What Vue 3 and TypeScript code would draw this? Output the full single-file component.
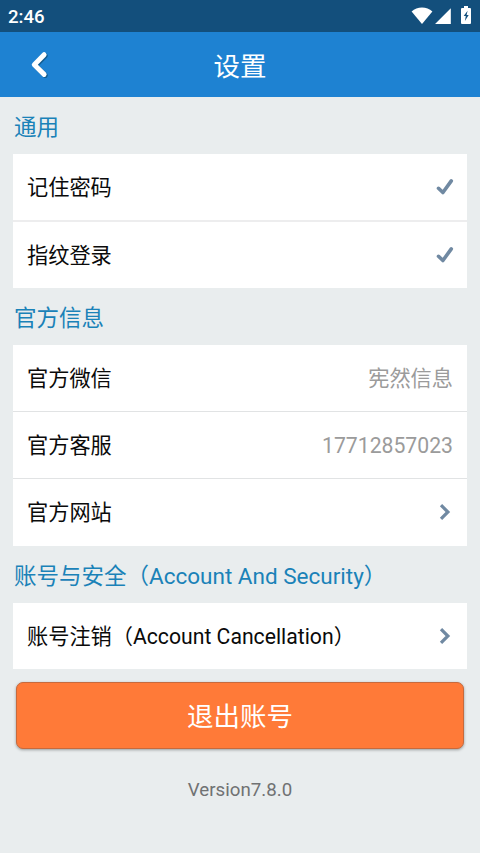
<script setup lang="ts">
type RowKind = 'check' | 'link' | 'text'

interface Row {
  label: string
  kind: RowKind
  value?: string
}

interface Section {
  title: string
  divider: 'thick' | 'thin'
  rows: Row[]
}

const sections: Section[] = [
  {
    title: '通用',
    divider: 'thick',
    rows: [
      { label: '记住密码', kind: 'check' },
      { label: '指纹登录', kind: 'check' },
    ],
  },
  {
    title: '官方信息',
    divider: 'thin',
    rows: [
      { label: '官方微信', kind: 'text', value: '宪然信息' },
      { label: '官方客服', kind: 'text', value: '17712857023' },
      { label: '官方网站', kind: 'link' },
    ],
  },
  {
    title: '账号与安全（Account And Security）',
    divider: 'thin',
    rows: [{ label: '账号注销（Account Cancellation）', kind: 'link' }],
  },
]
</script>

<template>
  <div class="screen">
    <div class="status">
      <span class="clock">2:46</span>
      <div class="indicators">
        <svg class="wifi" width="22" height="18" viewBox="0 0 22 18">
          <path d="M.6 4.400Q5 .4 11 .4t10.400 4L11 17Z" fill="#fff" />
        </svg>
        <svg class="signal" width="16" height="16" viewBox="0 0 16 16">
          <path d="M15.800.3v15.700H.1Z" fill="#fff" />
        </svg>
        <svg class="battery" width="10" height="18" viewBox="0 0 10 18">
          <path d="M3 0h4v2h2q1 0 1 1v14q0 1-1 1H1q-1 0-1-1V3q0-1 1-1h2Z" fill="#fff" />
          <path d="M6.600 4.700 2.700 10.100h2.100l-.9 5 3.800-6.100H5.600Z" fill="#134f7c" />
        </svg>
      </div>
    </div>

    <header class="bar">
      <button class="back" aria-label="返回">
        <svg width="20" height="30" viewBox="0 0 20 30">
          <path d="M14.100 4.700 4.300 14.700l9.800 9.700" transform="translate(1.200 1)" stroke="#135d91" />
          <path d="M14.100 4.700 4.300 14.700l9.800 9.700" stroke="#fff" />
        </svg>
      </button>
      <h1 class="title">设置</h1>
    </header>

    <main class="content">
      <section v-for="section in sections" :key="section.title">
        <h2 class="heading">{{ section.title }}</h2>
        <ul class="card" :class="section.divider">
          <li v-for="row in section.rows" :key="row.label" class="row">
            <span class="label">{{ row.label }}</span>
            <svg v-if="row.kind === 'check'" class="check" width="18" height="18" viewBox="0 0 18 18">
              <path d="M2.500 10.300 6.900 14.500 15.300 2.900" />
            </svg>
            <svg v-else-if="row.kind === 'link'" class="chevron" width="12" height="18" viewBox="0 0 12 18">
              <path d="M2 2.100 8.900 9 2 15.900" />
            </svg>
            <span v-else class="value">{{ row.value }}</span>
          </li>
        </ul>
      </section>

      <button class="logout">退出账号</button>
      <p class="version">Version7.8.0</p>
    </main>
  </div>
</template>

<style>
body {
  background: #e9edee;
}
</style>

<style scoped>
.screen {
  width: 480px;
  height: 853px;
  overflow: hidden;
  display: flex;
  flex-direction: column;
  background: #e9edee;
  font-family: Roboto, 'Noto Sans CJK SC', sans-serif;
}

.status {
  flex: none;
  display: flex;
  justify-content: space-between;
  height: 32px;
  box-sizing: border-box;
  padding: 0 8px;
  background: #134f7c;
  color: #fff;
}

.clock {
  font-size: 18.6px;
  font-weight: 500;
  line-height: 34px;
}

.indicators {
  display: flex;
  align-items: flex-start;
}

.wifi {
  margin: 7px 2px 0 0;
}

.signal {
  margin: 8px 10px 0 0;
}

.battery {
  margin: 6px 1px 0 0;
}

.bar {
  flex: none;
  display: grid;
  grid-template-columns: 80px 1fr 80px;
  align-items: center;
  height: 65px;
  background: #1e82d2;
}

.back {
  display: flex;
  align-items: center;
  height: 65px;
  padding: 0 0 0 30px;
  border: 0;
  background: none;
}

.back path {
  fill: none;
  stroke-width: 5;
  stroke-linecap: round;
  stroke-linejoin: round;
}

.title {
  margin: 4px 0 0;
  color: #fff;
  font-size: 26.500px;
  font-weight: 400;
  line-height: 40px;
  text-align: center;
}

.content {
  padding: 0 13px;
}

.heading {
  height: 57px;
  margin: 0;
  padding-left: 1px;
  color: #1a82b8;
  font-size: 22.500px;
  font-weight: 400;
  line-height: 60px;
  white-space: nowrap;
}

.card {
  margin: 0;
  padding: 0;
  list-style: none;
  background: #fff;
}

.row {
  display: flex;
  align-items: center;
  justify-content: space-between;
  height: 66px;
  padding: 0 14px;
}

.thick .row + .row {
  border-top: 2px solid #ededee;
}

.thin .row + .row {
  border-top: 1px solid #e1e3e4;
}

.thin .row:last-child {
  height: 66.500px;
}

.label,
.value {
  padding-top: 2px;
  font-size: 21.200px;
  line-height: 32px;
  white-space: nowrap;
}

.label {
  color: #0a0a0a;
}

.value {
  color: #9b9b9b;
}

.check,
.chevron {
  fill: none;
  stroke: #7089a2;
}

.check {
  margin-right: -1px;
  stroke-width: 3.600;
  stroke-linecap: round;
  stroke-linejoin: round;
}

.chevron {
  margin-right: 2px;
  stroke-width: 3.200;
}

.logout {
  display: block;
  width: 448px;
  height: 67px;
  margin: 13px auto 0;
  padding: 2px 0 0;
  border: 1px solid #c76a3d;
  border-radius: 7px;
  background: #ff7a38;
  box-shadow: 0 1px 3px rgba(0, 0, 0, 0.35);
  color: #fff;
  font-family: inherit;
  font-size: 26.500px;
  line-height: 63px;
}

.version {
  margin: 26px 0 0;
  color: #707273;
  font-size: 18.700px;
  line-height: 30px;
  text-align: center;
}
</style>
